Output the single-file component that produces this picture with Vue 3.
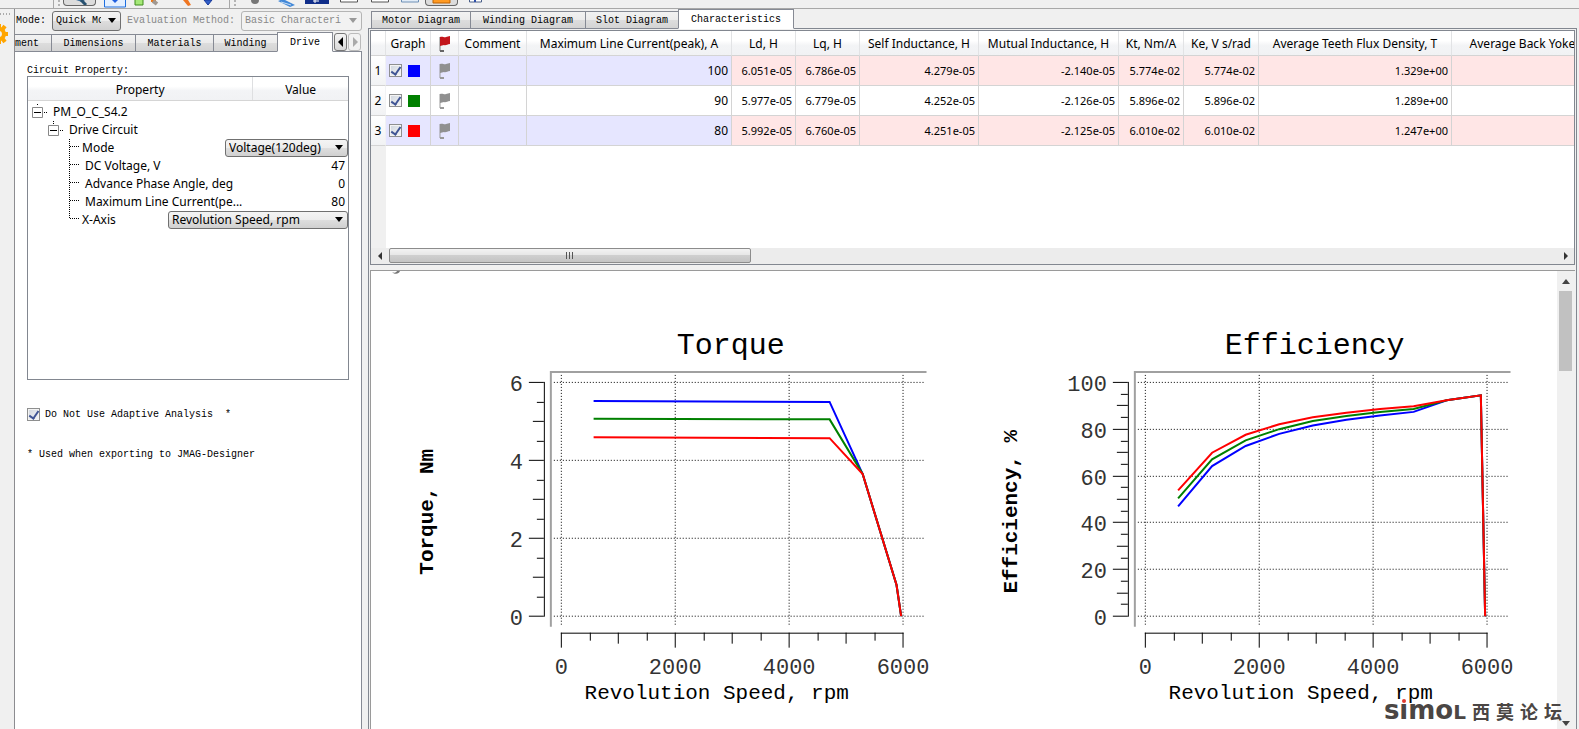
<script setup>
import { ref } from 'vue'

const toolGroups = [
  [
    { name: 'Select', w: 33, pressed: true, shapes: [{ d: 'M13 0h9l-3 2z', fill: '#3c6f9c' }, { d: 'M18 0l5 5', stroke: '#27506f', sw: 3 }] },
    { name: 'Frame', w: 34, shapes: [{ d: 'M8.500-2v9h21v-9', fill: '#e4f0ff', stroke: '#1d6fe0', sw: 1 }, { d: 'M16 0h6l-3 3z', fill: '#1f5fe0' }] },
    { name: 'Add part', w: 16, shapes: [{ d: 'M5-1h8v6h-8z', fill: '#a5e878', stroke: '#3f8c1c', sw: 1 }] },
    { name: 'Edit', w: 26, shapes: [{ d: 'M5 0h5v2h-5z', fill: '#f07818' }, { d: 'M7 1l4 3', stroke: '#a09890', sw: 4 }] },
    { name: 'Pencil', w: 25, shapes: [{ d: 'M11 0h5l3 5-3 1z', fill: '#ef7622' }] },
    { name: 'Material', w: 32, shapes: [{ d: 'M7 0h8l-4 5z', fill: '#315fc8', stroke: '#17389a', sw: 1 }] }
  ],
  [
    { name: 'Sphere', w: 25, shapes: [{ d: 'M8 0h8a4 4 0 0 1-8 0z', fill: '#777' }] },
    { name: 'Mesh', w: 32, shapes: [{ d: 'M10 1l5-2 12 6-5 2z', fill: '#4389d8' }, { d: 'M13 2l10 3', stroke: '#c6ddf6', sw: 1 }] },
    { name: 'Plot', w: 34, shapes: [{ d: 'M5 0h24v4h-24z', fill: '#102e8a' }, { d: 'M15 0v3M13 1h6', stroke: '#fff', sw: 1 }] },
    { name: 'Window', w: 30, shapes: [{ d: 'M6.500-2v4h17v-4', fill: '#fff', stroke: '#555', sw: 1 }] },
    { name: 'Split', w: 31, shapes: [{ d: 'M7.500-2v4h17v-4', fill: '#fff', stroke: '#555', sw: 1 }] },
    { name: 'Export', w: 30, shapes: [{ d: 'M6.500-2v4h17v-4', fill: '#e3edf8', stroke: '#6e90b6', sw: 1 }] },
    { name: 'Results', w: 33, pressed: true, shapes: [{ d: 'M8-1h17v4h-17z', fill: '#ff9a22', stroke: '#bd6205', sw: 1 }] },
    { name: 'Report', w: 30, shapes: [{ d: 'M11.500-2v4h12v-4', fill: '#fff', stroke: '#4a5f88', sw: 1 }, { d: 'M17 0v2', stroke: '#2c4da8', sw: 2 }] }
  ]
]

const leftTabs = [
  { label: 'ment', cls: 'cut' },
  { label: 'Dimensions', cls: 'dim' },
  { label: 'Materials', cls: 'mat' },
  { label: 'Winding', cls: 'win' },
  { label: 'Drive', cls: 'drv' }
]
const rightTabs = ['Motor Diagram', 'Winding Diagram', 'Slot Diagram', 'Characteristics']
const activeLeft = ref('Drive')
const activeRight = ref('Characteristics')
const adaptive = ref(true)

const props = [
  { id: 'mode', label: 'Mode', select: 'Voltage(120deg)', cls: 'sel-mode' },
  { id: 'dc', label: 'DC Voltage, V', value: '47' },
  { id: 'phase', label: 'Advance Phase Angle, deg', value: '0' },
  { id: 'max', label: 'Maximum Line Current(pe...', value: '80' },
  { id: 'xaxis', label: 'X-Axis', select: 'Revolution Speed, rpm', cls: 'sel-axis', last: true }
]

const columns = ['Ld, H', 'Lq, H', 'Self Inductance, H', 'Mutual Inductance, H', 'Kt, Nm/A', 'Ke, V s/rad', 'Average Teeth Flux Density, T']
const rows = ref([
  { color: 'blue', on: true, max: 100, v: ['6.051e-05', '6.786e-05', '4.279e-05', '-2.140e-05', '5.774e-02', '5.774e-02', '1.329e+00'] },
  { color: 'green', on: true, max: 90, v: ['5.977e-05', '6.779e-05', '4.252e-05', '-2.126e-05', '5.896e-02', '5.896e-02', '1.289e+00'] },
  { color: 'red', on: true, max: 80, v: ['5.992e-05', '6.760e-05', '4.251e-05', '-2.125e-05', '6.010e-02', '6.010e-02', '1.247e+00'] }
])

// Plot geometry inside one 584 x 458 chart cell
const X0 = 190
const Y0 = 345
const PW = 342
const PH = 234
const px = rpm => X0 + (rpm * PW) / 6000
const range = (n, f) => Array.from({ length: n + 1 }, (_, i) => f(i))

const xTicks = range(12, i => ({
  p: Math.round(px(i * 500)) + 0.5,
  len: i % 4 === 0 ? 15 : i % 2 === 0 ? 11 : 8,
  label: i % 4 === 0 ? String(i * 500) : ''
}))

function makeChart(title, unit, max, count, per, series) {
  const py = v => Y0 + 0.5 - (v * PH) / max
  return {
    title,
    unit,
    yTicks: range(count, i => {
      const v = (max * i) / count
      return {
        p: Math.round(py(v) - 0.5) + 0.5,
        len: i % per === 0 ? 15 : i % 2 === 0 ? 11 : 7,
        label: i % per === 0 ? String(v) : ''
      }
    }),
    series: series.map(s => ({
      color: s.color,
      points: s.data.map(([x, y]) => `${px(x).toFixed(1)},${py(y).toFixed(1)}`).join(' ')
    }))
  }
}

const torque = top => [[575, top], [4720, top - 0.02], [5300, 3.65], [5895, 0.8], [5975, 0]]
const speeds = [585, 1180, 1770, 2360, 2950, 3540, 4130, 4720, 5300, 5900, 5975]
const eff = a => [...a, 92.4, 94.5, 0].map((y, i) => [speeds[i], y])

const charts = [
  makeChart('Torque', 'Torque, Nm', 6, 12, 4, [
    { color: '#0000ff', data: torque(5.52) },
    { color: '#008000', data: torque(5.07) },
    { color: '#ff0000', data: torque(4.59) }
  ]),
  makeChart('Efficiency', 'Efficiency, %', 100, 20, 4, [
    { color: '#0000ff', data: eff([47, 64.2, 72.8, 78, 81.6, 84, 85.8, 87.4]) },
    { color: '#008000', data: eff([50.4, 67.1, 75.2, 80, 83.5, 85.6, 87.3, 88.6]) },
    { color: '#ff0000', data: eff([53.8, 69.9, 77.6, 82.1, 85.1, 87, 88.6, 89.8]) }
  ])
]
</script>

<template>
  <div class="app">
    <header class="toolbar">
      <div v-for="(g, gi) in toolGroups" :key="gi" class="tool-group">
        <span class="grip"><i></i><i></i></span>
        <button v-for="t in g" :key="t.name" type="button" class="tool" :class="{ pressed: t.pressed }" :aria-label="t.name">
          <svg :width="t.w" height="8" :viewBox="`0 0 ${t.w} 8`">
            <path v-for="(s, i) in t.shapes" :key="i" :d="s.d" :fill="s.fill || 'none'" :stroke="s.stroke || 'none'" :stroke-width="s.sw || 0" />
          </svg>
        </button>
      </div>
    </header>

    <div class="body">
      <aside class="rail">
        <span class="rail-grip"><i></i><i></i><i></i><i></i></span>
        <svg class="gear" width="10" height="22" viewBox="0 0 10 22">
          <g fill="none" stroke="#ffa500">
            <circle cx="-1" cy="11" r="5" stroke-width="4" />
            <path d="M2 7l3-4M4 11h4M2 15l3 4M-1 6v-5M-1 16v5" stroke-width="4" />
          </g>
        </svg>
      </aside>

      <section class="left">
        <div class="mode-row">
          <label for="mode-sel">Mode:</label>
          <span class="combo quick"><select id="mode-sel"><option>Quick Mode</option></select></span>
          <label for="eval-sel" class="dim-text">Evaluation Method:</label>
          <span class="combo eval off"><select id="eval-sel" disabled><option>Basic Characteristics</option></select></span>
        </div>

        <div class="tabs left-tabs">
          <button v-for="t in leftTabs" :key="t.label" type="button" class="tab" :class="[t.cls, { active: activeLeft === t.label }]" @click="activeLeft = t.label">{{ t.label }}</button>
          <button type="button" class="scroll-btn" aria-label="Previous tab"><svg width="8" height="10" viewBox="0 0 8 10"><path d="M6 0v10l-5-5z" fill="#000" /></svg></button>
          <button type="button" class="scroll-btn faded" aria-label="Next tab"><svg width="8" height="10" viewBox="0 0 8 10"><path d="M2 0v10l5-5z" fill="#aaa" /></svg></button>
        </div>

        <div class="left-pane">
          <div class="caption">Circuit Property:</div>
          <div class="tree">
            <div class="tree-head"><span class="h-prop">Property</span><span class="h-val">Value</span></div>
            <div class="tree-row">
              <svg width="25" height="18" viewBox="0 0 25 18">
                <path d="M9.500 1v2M16 9.500h4" stroke="#000" stroke-dasharray="1 1" />
                <path d="M4.500 4.500h10v10h-10z" fill="#fff" stroke="#888" /><path d="M6 9.500h7" stroke="#000" />
              </svg>
              <span>PM_O_C_S4.2</span>
            </div>
            <div class="tree-row">
              <svg width="41" height="18" viewBox="0 0 41 18">
                <path d="M25.500 0v4M32 9.500h4" stroke="#000" stroke-dasharray="1 1" />
                <path d="M20.500 4.500h10v10h-10z" fill="#fff" stroke="#888" /><path d="M22 9.500h7" stroke="#000" />
              </svg>
              <span>Drive Circuit</span>
            </div>
            <div v-for="p in props" :key="p.id" class="tree-row">
              <svg width="54" height="18" viewBox="0 0 54 18">
                <path :d="p.last ? 'M41.500 0v8' : 'M41.500 0v18'" stroke="#000" stroke-dasharray="1 1" />
                <path d="M42 7.500h9" stroke="#000" stroke-dasharray="1 1" />
              </svg>
              <label v-if="p.select" :for="p.id">{{ p.label }}</label>
              <span v-else class="editable">{{ p.label }}</span>
              <span v-if="p.select" class="combo cell" :class="p.cls"><select :id="p.id"><option>{{ p.select }}</option></select></span>
              <span v-else class="value">{{ p.value }}</span>
            </div>
          </div>
          <label class="check-line"><input v-model="adaptive" type="checkbox" class="check" /><span>Do Not Use Adaptive Analysis&nbsp; *</span></label>
          <p class="note">* Used when exporting to JMAG-Designer</p>
        </div>
      </section>

      <main class="right">
        <div class="tabs right-tabs">
          <button v-for="t in rightTabs" :key="t" type="button" class="tab" :class="{ active: activeRight === t }" @click="activeRight = t">{{ t }}</button>
        </div>
        <div class="right-pane">
          <div class="grid-frame">
            <div class="grid-view">
              <table>
                <colgroup>
                  <col class="c-n" /><col class="c-g" /><col class="c-f" /><col class="c-c" /><col class="c-m" />
                  <col class="c-l" /><col class="c-l" /><col class="c-s" /><col class="c-u" /><col class="c-kt" /><col class="c-ke" /><col class="c-t" /><col class="c-b" />
                </colgroup>
                <thead>
                  <tr>
                    <th></th>
                    <th>Graph</th>
                    <th>
                      <svg class="flag" width="14" height="18" viewBox="0 0 14 18">
                        <path d="M2 2v14" stroke="#777" stroke-width="1" /><path d="M2 16h4" stroke="#666" stroke-width="2" />
                        <path d="M2 2c3-1 4 1 6 0l4-1v8c-3 0-4 2-6 1l-4 1z" fill="#c3161c" />
                      </svg>
                    </th>
                    <th>Comment</th>
                    <th>Maximum Line Current(peak), A</th>
                    <th v-for="c in columns" :key="c">{{ c }}</th>
                    <th>Average Back Yoke Flux Density, T</th>
                  </tr>
                </thead>
                <tbody>
                  <tr v-for="(r, i) in rows" :key="i" :class="{ tint: i % 2 === 0 }">
                    <th>{{ i + 1 }}</th>
                    <td class="in">
                      <span class="graph"><input v-model="r.on" type="checkbox" class="check" :aria-label="`Show graph ${i + 1}`" /><i class="swatch" :class="r.color"></i></span>
                    </td>
                    <td class="in mid">
                      <svg class="flag" width="14" height="18" viewBox="0 0 14 18">
                        <path d="M2 2v14" stroke="#999" stroke-width="1" /><path d="M2 16h4" stroke="#999" stroke-width="2" />
                        <path d="M2 2c3-1 4 1 6 0l4-1v8c-3 0-4 2-6 1l-4 1z" fill="#909090" />
                      </svg>
                    </td>
                    <td class="in"></td>
                    <td class="in num">{{ r.max }}</td>
                    <td v-for="(v, k) in r.v" :key="k" class="out num sci">{{ v }}</td>
                    <td class="out"></td>
                  </tr>
                </tbody>
              </table>
              <div class="gutter"></div>
            </div>
            <div class="hscroll">
              <button type="button" aria-label="Scroll left"><svg width="5" height="8" viewBox="0 0 5 8"><path d="M4 0v8l-4-4z" fill="#333" /></svg></button>
              <div class="htrack"><div class="hthumb"><i></i><i></i><i></i></div></div>
              <button type="button" aria-label="Scroll right"><svg width="5" height="8" viewBox="0 0 5 8"><path d="M1 0v8l4-4z" fill="#333" /></svg></button>
            </div>
          </div>

          <div class="chart-frame">
            <div class="charts">
              <svg v-for="(c, ci) in charts" :key="c.title" class="chart" viewBox="0 0 584 458">
                <path v-if="ci === 0" d="M21 1c2 1 4 1 5-1h3c-1 3-5 4-8 1z" fill="#777" />
                <text class="title" x="360" y="83" text-anchor="middle">{{ c.title }}</text>
                <path d="M180 356v-255h376" class="bevel" />
                <g class="gridlines">
                  <template v-for="t in c.yTicks" :key="'g' + t.p"><path v-if="t.label" :d="`M183 ${t.p}H554`" /></template>
                  <template v-for="t in xTicks" :key="'v' + t.p"><path v-if="t.label" :d="`M${t.p} 104V354`" /></template>
                </g>
                <g class="axis">
                  <path d="M173.500 111V346" />
                  <path d="M190 362.500H533" />
                  <path v-for="t in c.yTicks" :key="'y' + t.p" :d="`M173 ${t.p}h${-t.len}`" />
                  <path v-for="t in xTicks" :key="'x' + t.p" :d="`M${t.p} 362v${t.len}`" />
                </g>
                <polyline v-for="s in c.series" :key="s.color" :points="s.points" :stroke="s.color" class="curve" />
                <g class="tick-text">
                  <template v-for="t in c.yTicks" :key="'l' + t.p"><text v-if="t.label" x="152" :y="t.p + 9" text-anchor="end">{{ t.label }}</text></template>
                  <template v-for="t in xTicks" :key="'m' + t.p"><text v-if="t.label" :x="t.p" y="403" text-anchor="middle">{{ t.label }}</text></template>
                </g>
                <text class="x-name" x="346" y="428" text-anchor="middle">Revolution Speed, rpm</text>
                <text class="y-name" transform="translate(62 241) rotate(-90)" text-anchor="middle">{{ c.unit }}</text>
              </svg>
            </div>
            <div class="vscroll">
              <button type="button" aria-label="Scroll up"><svg width="8" height="5" viewBox="0 0 8 5"><path d="M0 5h8l-4-5z" fill="#444" /></svg></button>
              <div class="vthumb"></div>
              <button type="button" class="down" aria-label="Scroll down"><svg width="8" height="5" viewBox="0 0 8 5"><path d="M0 0h8l-4 5z" fill="#444" /></svg></button>
            </div>
          </div>
        </div>
      </main>
    </div>

    <div class="watermark">
      <span class="brand"><span>s</span><span class="dotted">ı</span><span>mo</span><span class="cap">L</span></span>
      <span class="forum"><span>西</span><span>莫</span><span>论</span><span>坛</span></span>
    </div>
  </div>
</template>

<style>
body { background: #f0f0f0; overflow: hidden; }
</style>

<style scoped>
* { box-sizing: border-box; }
.app { position: relative; display: flex; flex-direction: column; height: 100vh; overflow: hidden; background: #f0f0f0; color: #000; font: 10px/12px "Liberation Mono", monospace; }
button, select { font: inherit; color: inherit; margin: 0; padding: 0; border: 0; background: none; }
i { display: block; }
svg { display: block; }

.toolbar { display: flex; flex: none; height: 9px; padding-left: 53px; border-bottom: 1px solid #a8a8a8; overflow: hidden; }
.tool-group { display: flex; border-left: 1px solid #a8a8a8; }
.grip { display: flex; flex-direction: column; gap: 2px; width: 9px; padding: 0 4px; }
.grip i { width: 2px; height: 2px; background: #b4b4b4; }
.tool-group + .tool-group .grip { width: 13px; }
.tool { height: 8px; }
.tool.pressed { height: 6px; border: 1px solid #666; border-top: 0; border-radius: 0 0 4px 4px; background: #dcdcdc; overflow: hidden; }
.tool.pressed svg { margin: 0 -1px; }

.body { display: flex; flex: 1; min-height: 0; }
.rail { flex: none; width: 15px; border-right: 1px solid #8c8c90; background: #f0f0f0; overflow: hidden; }
.rail-grip { display: flex; gap: 2px; padding-top: 4px; height: 14px; }
.rail-grip i { width: 1px; height: 2px; background: #aaa; }

.left { display: flex; flex-direction: column; flex: none; width: 347px; }
.mode-row { display: flex; align-items: center; height: 23px; padding-left: 1px; }
.mode-row label { width: 36px; white-space: nowrap; }
.mode-row label.dim-text { width: 114px; margin-left: 6px; color: #888; }
.combo { position: relative; display: block; height: 20px; border: 1px solid #707070; border-radius: 3px; background: linear-gradient(#f4f4f4, #ececec 50%, #dedede 50%, #d0d0d0); }
.combo select { display: block; width: 100%; height: 100%; padding: 0 19px 0 3px; appearance: none; outline: 0; text-overflow: clip; }
.combo::after { content: ""; position: absolute; right: 4px; top: calc(50% - 3px); border: 4px solid transparent; border-top: 5px solid #000; border-bottom: 0; pointer-events: none; }
.quick { width: 69px; }
.eval { width: 121px; }
.combo.off { border-color: #b4b4b4; background: #f2f2f2; }
.combo.off select { padding-right: 20px; color: #888; opacity: 1; }
.combo.off::after { border-top-color: #999; }

.tabs { display: flex; align-items: flex-end; height: 20px; position: relative; z-index: 1; margin-bottom: -1px; }
.tab { height: 18px; padding: 2px 0 0; border: 1px solid #868a94; border-right-width: 0; background: linear-gradient(#f2f2f2, #ebebeb 50%, #dddddd 50%, #d4d4d4); text-align: center; white-space: nowrap; overflow: hidden; }
.tab.active { height: 20px; background: #fff; border-right-width: 1px; border-bottom-color: #fff; }
.cut { width: 36px; border-left: 0; text-align: left; }
.dim { width: 84px; }
.mat { width: 78px; }
.win { width: 64px; }
.drv { width: 56px; }
.scroll-btn { display: flex; align-items: center; justify-content: center; width: 13px; height: 18px; margin: 0 0 1px 1px; border: 1px solid #777; border-radius: 3px; background: linear-gradient(#f4f4f4, #d8d8d8); }
.scroll-btn.faded { border-color: #bbb; background: #f2f2f2; }

.left-pane { flex: 1; padding: 13px 12px 0 11px; border: 1px solid #868a94; border-bottom: 0; border-left: 0; background: #fff; }
.caption { height: 11px; padding-left: 1px; }
.tree { height: 304px; border: 1px solid #828790; margin-left: 1px; background: #fff; font: 12px/18px "Noto Sans", sans-serif; }
.tree-head { display: flex; height: 24px; margin-bottom: 2px; border-bottom: 1px solid #d5d5d5; background: linear-gradient(#fff 40%, #f3f4f6 60%, #f1f2f4); text-align: center; line-height: 25px; }
.h-prop { flex: 225; border-right: 1px solid #dedfe1; }
.h-val { flex: 95; }
.tree-row { display: flex; align-items: center; height: 18px; white-space: nowrap; }
.editable { padding-left: 3px; }
.value { margin-left: auto; padding-right: 3px; }
.cell { height: 18px; margin-left: auto; }
.cell select { line-height: 16px; }
.sel-mode { width: 123px; }
.sel-axis { width: 180px; }

.check { appearance: none; position: relative; flex: none; width: 13px; height: 13px; margin: 0; border: 1px solid #8e8f8f; background: linear-gradient(135deg, #cfd5de, #f6f6f6); box-shadow: inset 0 0 0 1px #f4f4f4; }
.check:checked::after { content: ""; position: absolute; left: 3px; top: 0; width: 4px; height: 8px; border: solid #3f5494; border-width: 0 2px 2px 0; transform: rotate(35deg); }
.check-line { display: flex; align-items: center; gap: 5px; margin: 28px 0 0 1px; }
.note { margin: 28px 0 0 1px; }

.right { display: flex; flex-direction: column; flex: 1; min-width: 0; padding: 0 2px 0 6px; }
.right-tabs { padding-left: 3px; }
.right-tabs .tab { padding: 2px 10px 0; }
.right-tabs .tab.active { padding: 2px 12px 0; }
.right-tabs .tab:nth-child(2) { padding: 2px 12px 0; }
.right-pane { display: flex; flex-direction: column; flex: 1; min-height: 0; gap: 5px; padding: 1px 1px 0; border: 1px solid #828790; border-bottom: 0; }

.grid-frame { flex: none; border: 1px solid #828790; background: #fff; }
.grid-view { display: flex; flex-direction: column; height: 217px; overflow: hidden; }
table { flex: none; width: 1307px; table-layout: fixed; border-collapse: separate; border-spacing: 0; font: 12px/16px "Noto Sans", sans-serif; white-space: nowrap; }
.c-n { width: 15px; } .c-g { width: 45px; } .c-f { width: 28px; } .c-c { width: 68px; } .c-m { width: 205px; }
.c-l { width: 64px; } .c-s { width: 119px; } .c-u { width: 140px; } .c-kt { width: 65px; } .c-ke { width: 75px; } .c-t { width: 193px; } .c-b { width: 226px; }
th, td { padding: 0; height: 30px; border-right: 1px solid #d4d4d4; border-bottom: 1px solid #d4d4d4; font-weight: 400; }
thead th { height: 25px; padding-top: 1px; border-right-color: #e2e3e5; background: linear-gradient(#fff 40%, #f3f4f6 60%, #f1f2f4); }
tbody th { background: linear-gradient(#fff, #f1f2f4); border-right-color: #f1f2f4; }
.tint .in { background: #e6e6ff; }
.tint .out { background: #ffe6e6; }
.num { text-align: right; padding-right: 3px; }
.sci { font-size: 11px; }
.flag { margin: 0 auto; }
.graph { display: flex; align-items: center; gap: 6px; padding-left: 3px; }
.swatch { width: 12px; height: 12px; }
.swatch.blue { background: #00f; }
.swatch.green { background: #008000; }
.swatch.red { background: #f00; }
.gutter { flex: 1; width: 15px; background: #f0f0f0; }

.hscroll { display: flex; height: 16px; background: #ececec; }
.hscroll button { display: flex; align-items: center; justify-content: center; width: 18px; }
.htrack { flex: 1; }
.hthumb { display: flex; align-items: center; justify-content: center; gap: 2px; width: 31%; height: 15px; border: 1px solid #8c8c8c; border-radius: 2px; background: linear-gradient(#f3f3f3, #e6e6e6 50%, #cfcfcf 50%, #c4c4c4); }
.hthumb i { width: 1px; height: 7px; background: #555; }

.chart-frame { display: flex; flex: 1; min-height: 0; border: 1px solid #9a9a9a; border-width: 1px 0 0 1px; background: #fff; overflow: hidden; }
.charts { display: flex; align-items: flex-start; flex: 1; min-width: 0; padding-right: 19px; }
.chart { flex: 1; min-width: 0; font-family: "Liberation Mono", monospace; }
.title { font-size: 30px; }
.x-name { font-size: 21px; }
.y-name { font-size: 21px; font-weight: 700; }
.tick-text { font-size: 22px; fill: #333; }
.bevel { fill: none; stroke: #a0a0a0; stroke-width: 2; }
.gridlines path { stroke: #000; stroke-dasharray: 1 2; }
.axis path { stroke: #000; }
.curve { fill: none; stroke-width: 2; }
.vscroll { display: flex; flex-direction: column; flex: none; width: 18px; background: #f0f0f0; }
.vscroll button { display: flex; align-items: center; justify-content: center; height: 20px; }
.vscroll .down { height: 12px; margin-top: auto; }
.vthumb { width: 13px; height: 80px; margin-left: 2px; background: #c1c1c1; }

.watermark { position: absolute; right: 17px; bottom: 6px; display: flex; align-items: center; gap: 6px; color: #4b4644; height: 24px; }
.brand { display: flex; align-items: baseline; font: 700 26px/24px "DejaVu Sans", sans-serif; }
.brand .cap { font-size: 20px; }
.dotted { position: relative; }
.dotted::before { content: ""; position: absolute; left: 3px; top: 1px; width: 4px; height: 4px; border-radius: 50%; background: #e23b30; }
.forum { display: flex; gap: 6px; font: 700 18px/24px "Noto Sans CJK SC", sans-serif; }
</style>
